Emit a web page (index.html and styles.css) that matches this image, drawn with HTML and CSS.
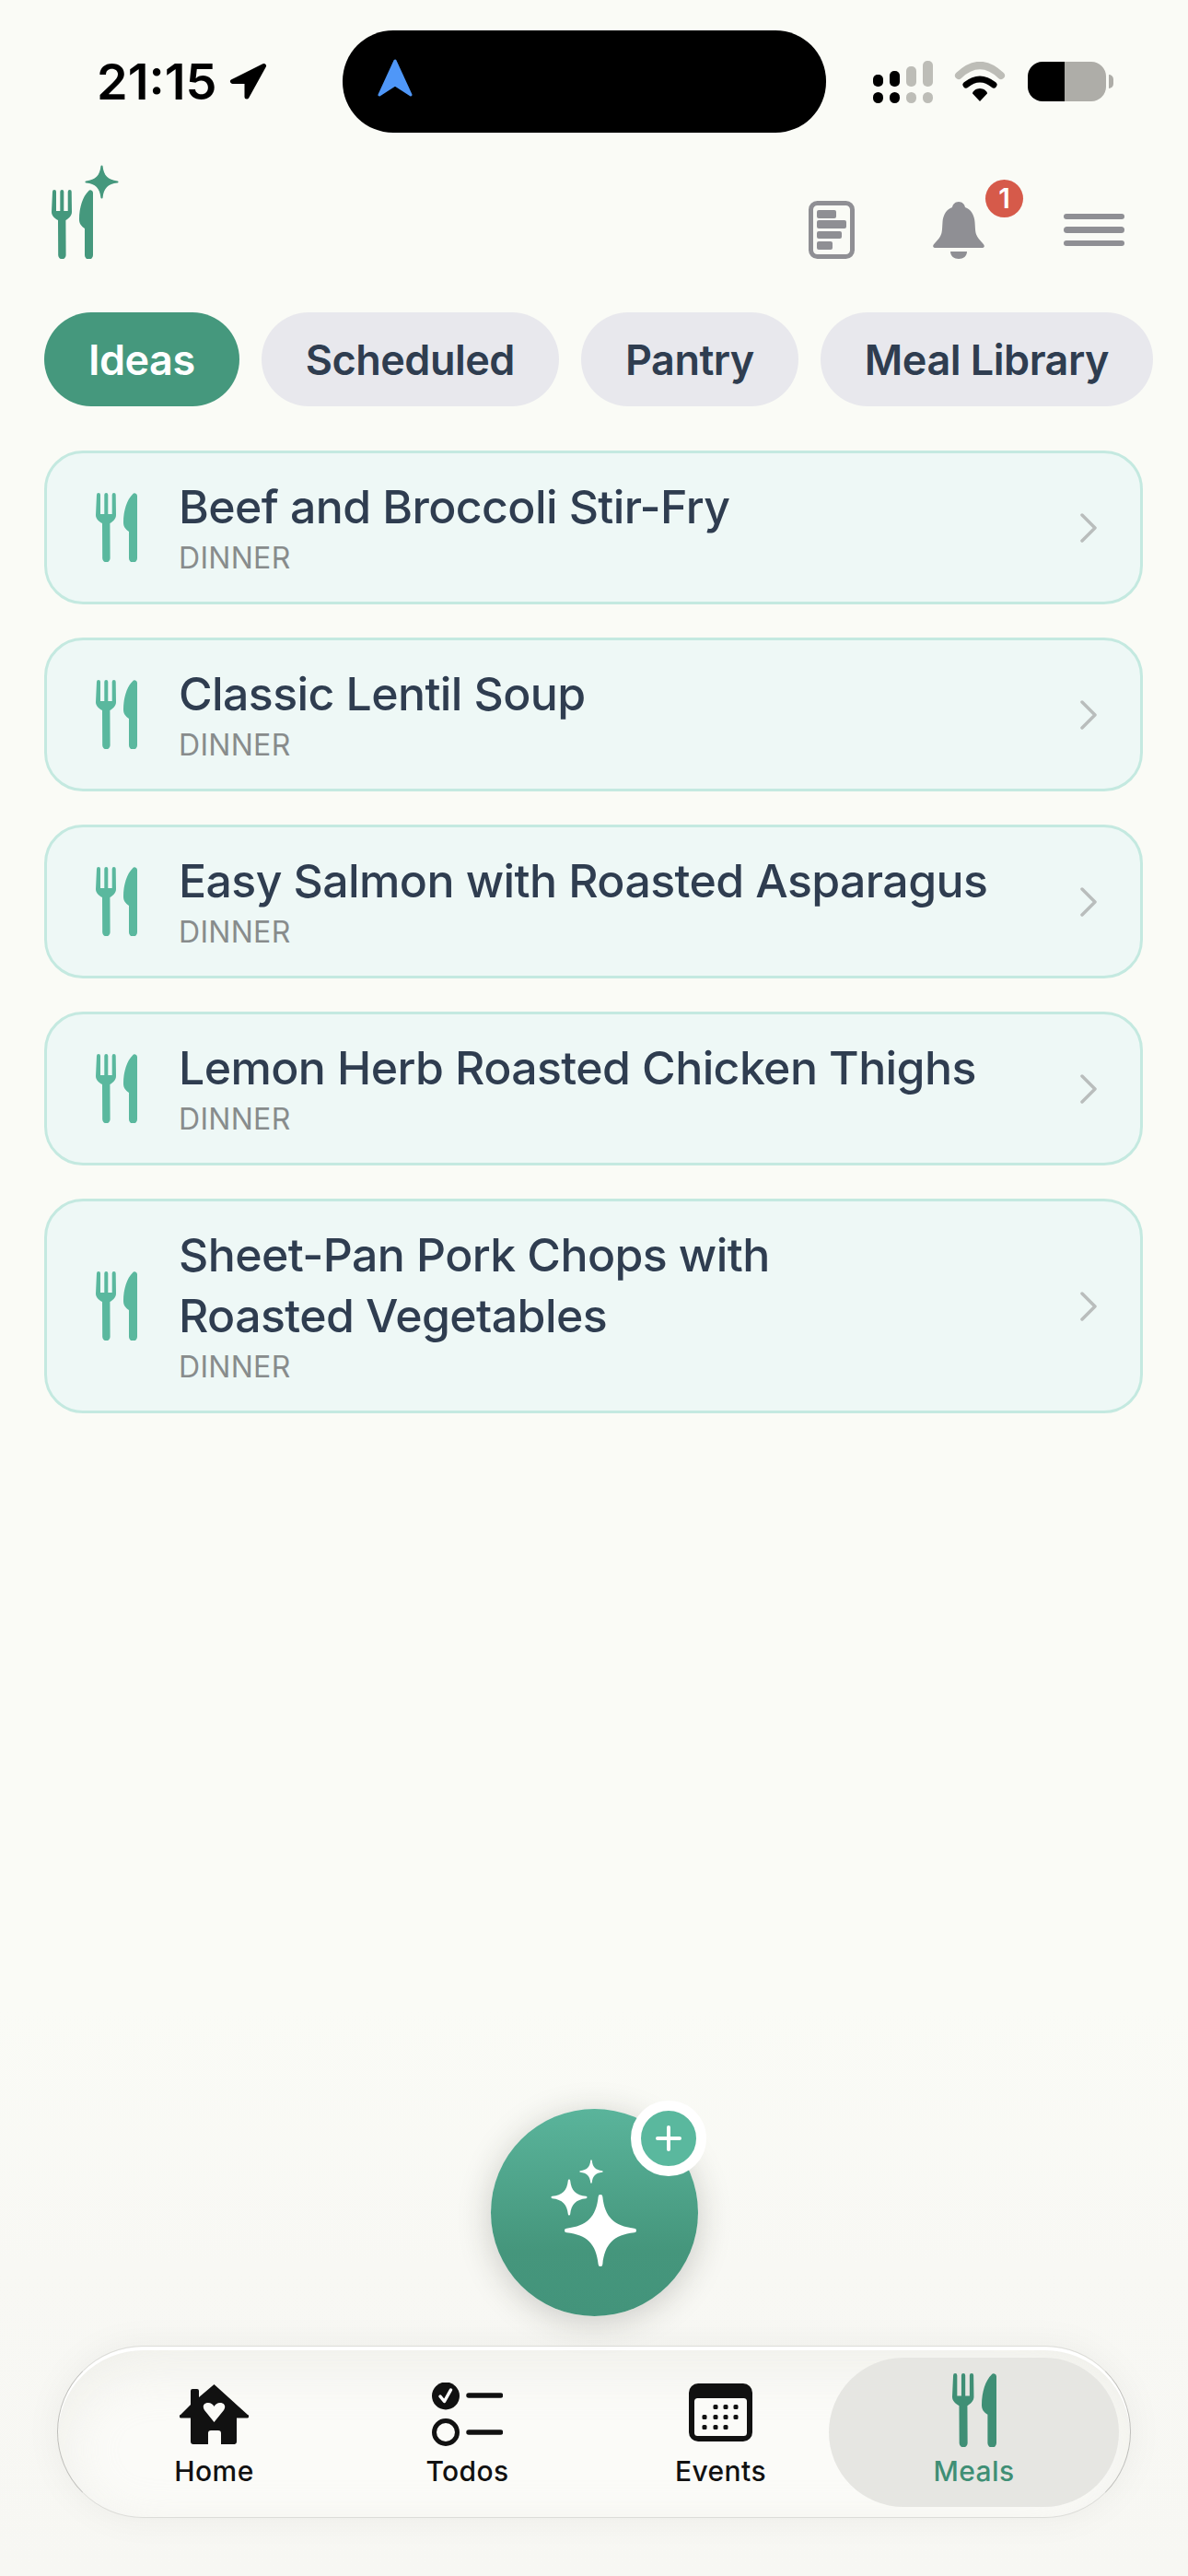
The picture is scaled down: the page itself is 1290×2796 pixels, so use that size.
FILE: index.html
```html
<!DOCTYPE html>
<html lang="en">
<head>
<meta charset="utf-8">
<title>Meals</title>
<link rel="stylesheet" href="styles.css">
</head>
<body>
<svg class="defs" width="0" height="0" aria-hidden="true">
  <symbol id="cutlery" viewBox="0 0 45 75">
    <path d="M1 2a2 2 0 0 1 4 0V23h4.300V2a2 2 0 0 1 4 0V23h4.400V2a2 2 0 0 1 4 0L22 24C22 28 19 31 15.400 33L15.600 71a4.200 4.200 0 0 1-8.400 0L7 33C3 31 0 28 0 24Z"/>
    <path d="M45 3a2.800 2.800 0 0 0-5-1.600C34 7 30 19 30 32C30 37 32 39 36 42V71a4.500 4.500 0 0 0 9 0Z"/>
  </symbol>
  <symbol id="spark" viewBox="-12 -12 24 24">
    <path d="M-.7-11a.7.7 0 0 1 1.400 0C1.400-4.400 4.400-1.400 11-.7a.7.7 0 0 1 0 1.400C4.400 1.400 1.400 4.400.7 11a.7.7 0 0 1-1.400 0C-1.400 4.400-4.400 1.400-11 .7a.7.7 0 0 1 0-1.400C-4.400-1.400-1.400-4.400-.7-11Z"/>
  </symbol>
</svg>

<header class="status">
  <div class="status-left">
    <span class="clock">21:15</span>
    <svg class="loc" viewBox="0 0 42 41"><path d="M38.500 3.500 4.500 20.500H20V37Z"/></svg>
  </div>
  <div class="island">
    <svg class="island-arrow" viewBox="0 0 38 41"><path d="M19 2 2 39 19 28 36 39Z"/></svg>
  </div>
  <div class="status-right">
    <svg class="signal" viewBox="0 0 65 46">
      <g class="on"><rect x="0" y="15" width="11" height="13" rx="5"/><rect x="0" y="34" width="11" height="12" rx="5.500"/><rect x="18" y="11" width="11" height="17" rx="5"/><rect x="18" y="34" width="11" height="12" rx="5.500"/></g>
      <g class="off"><rect x="36" y="6" width="11" height="22" rx="5"/><rect x="36" y="34" width="11" height="12" rx="5.500"/><rect x="54" y="0" width="11" height="28" rx="5"/><rect x="54" y="34" width="11" height="12" rx="5.500"/></g>
    </svg>
    <svg class="wifi" viewBox="0 0 56 43">
      <path class="wifi-off" d="M5 15Q28-7 51 15"/>
      <path class="wifi-on" d="M13 25Q28 13 43 25"/>
      <path d="M28 29C32 29 36 32 36 34.500L28 43 20 34.500C20 32 24 29 28 29Z"/>
    </svg>
    <div class="battery"><div class="battery-cell"></div><div class="battery-nub"></div></div>
  </div>
</header>

<section class="topbar">
  <div class="logo">
    <svg class="cutlery logo-mark"><use href="#cutlery"/></svg>
    <svg class="logo-spark"><use href="#spark"/></svg>
  </div>
  <div class="actions">
    <svg class="doc" viewBox="0 0 50 63">
      <rect x="2.500" y="2.500" width="45" height="58" rx="7" class="doc-frame"/>
      <rect x="9" y="10" width="21" height="9" rx="2"/><rect x="9" y="21" width="32" height="9" rx="2"/><rect x="9" y="33" width="27" height="8" rx="2"/><rect x="9" y="44" width="17" height="9" rx="2"/>
    </svg>
    <div class="bell-wrap">
      <svg class="bell" viewBox="0 0 56 62">
        <path d="M28 0C32 0 34.500 3 35 6C41 8 45 14 45.500 22L46 30C46.500 38 50 40 54 45C57 48 56 50 53 50H3C0 50-1 48 2 45C6 40 9.500 38 10 30L10.500 22C11 14 15 8 21 6C21.500 3 24 0 28 0Z"/>
        <path d="M19 54H37C37 59 33 62 28 62C23 62 19 59 19 54Z"/>
      </svg>
      <span class="badge">1</span>
    </div>
    <div class="burger"><span></span><span></span><span></span></div>
  </div>
</section>

<nav class="tabs">
  <span class="tab active">Ideas</span>
  <span class="tab">Scheduled</span>
  <span class="tab">Pantry</span>
  <span class="tab">Meal Library</span>
</nav>

<main class="cards">
  <article class="card">
    <svg class="cutlery"><use href="#cutlery"/></svg>
    <div class="card-text"><h2>Beef and Broccoli Stir-Fry</h2><p>DINNER</p></div>
    <svg class="chev" viewBox="0 0 18 32"><path d="M2 2 16 16 2 30"/></svg>
  </article>
  <article class="card">
    <svg class="cutlery"><use href="#cutlery"/></svg>
    <div class="card-text"><h2>Classic Lentil Soup</h2><p>DINNER</p></div>
    <svg class="chev" viewBox="0 0 18 32"><path d="M2 2 16 16 2 30"/></svg>
  </article>
  <article class="card">
    <svg class="cutlery"><use href="#cutlery"/></svg>
    <div class="card-text"><h2>Easy Salmon with Roasted Asparagus</h2><p>DINNER</p></div>
    <svg class="chev" viewBox="0 0 18 32"><path d="M2 2 16 16 2 30"/></svg>
  </article>
  <article class="card">
    <svg class="cutlery"><use href="#cutlery"/></svg>
    <div class="card-text"><h2>Lemon Herb Roasted Chicken Thighs</h2><p>DINNER</p></div>
    <svg class="chev" viewBox="0 0 18 32"><path d="M2 2 16 16 2 30"/></svg>
  </article>
  <article class="card">
    <svg class="cutlery"><use href="#cutlery"/></svg>
    <div class="card-text"><h2>Sheet-Pan Pork Chops with<br>Roasted Vegetables</h2><p>DINNER</p></div>
    <svg class="chev" viewBox="0 0 18 32"><path d="M2 2 16 16 2 30"/></svg>
  </article>
</main>

<footer class="dock">
  <div class="fab">
    <svg class="fab-spark s1"><use href="#spark"/></svg>
    <svg class="fab-spark s2"><use href="#spark"/></svg>
    <svg class="fab-spark s3"><use href="#spark"/></svg>
    <div class="fab-plus"><svg viewBox="0 0 28 28"><path d="M14 2V26M2 14H26"/></svg></div>
  </div>
  <nav class="tabbar">
    <div class="item">
      <div class="slot">
        <svg class="i-home" viewBox="0 0 75 65"><path fill-rule="evenodd" d="M37.500 0 74 33A1.700 1.700 0 0 1 73 36.500H62V62A3 3 0 0 1 59 65H45V53A3 3 0 0 0 42 50H34A3 3 0 0 0 31 53V65H15A3 3 0 0 1 12 62V36.500H2A1.700 1.700 0 0 1 1 33L12 22V7A2 2 0 0 1 14 5H19A2 2 0 0 1 21 7V14ZM37.500 41 27 28C24 23 27 20 31 20C34 20 36.500 22 37.500 24C38.500 22 41 20 44 20C48 20 51 23 48 28Z"/></svg>
      </div>
      <span class="label">Home</span>
    </div>
    <div class="item">
      <div class="slot">
        <svg class="i-todos" viewBox="0 0 77 69">
          <circle cx="15" cy="14.500" r="15"/>
          <path class="todo-check" d="M9 15 13.500 20.500 20.500 8"/>
          <path class="todo-line" d="M40 14H74.500M40 54H74.500"/>
          <circle class="todo-ring" cx="15" cy="54" r="12.500"/>
        </svg>
      </div>
      <span class="label">Todos</span>
    </div>
    <div class="item">
      <div class="slot">
        <svg class="i-events" viewBox="0 0 69 63">
          <rect width="69" height="63" rx="10"/>
          <rect class="panel" x="6" y="16" width="57" height="41" rx="3.500"/>
          <g class="dots">
            <rect x="26.500" y="23" width="5" height="5" rx="1.500"/><rect x="37.500" y="23" width="5" height="5" rx="1.500"/><rect x="48.500" y="23" width="5" height="5" rx="1.500"/>
            <rect x="14.500" y="34" width="5" height="5" rx="1.500"/><rect x="26.500" y="34" width="5" height="5" rx="1.500"/><rect x="37.500" y="34" width="5" height="5" rx="1.500"/><rect x="48.500" y="34" width="5" height="5" rx="1.500"/>
            <rect x="14.500" y="45" width="5" height="5" rx="1.500"/><rect x="26.500" y="45" width="5" height="5" rx="1.500"/><rect x="37.500" y="45" width="5" height="5" rx="1.500"/>
          </g>
        </svg>
      </div>
      <span class="label">Events</span>
    </div>
    <div class="item current">
      <div class="slot top">
        <svg class="cutlery big"><use href="#cutlery"/></svg>
      </div>
      <span class="label">Meals</span>
    </div>
  </nav>
</footer>
</body>
</html>
```

FILE: styles.css
```css
* { box-sizing: border-box; }
html, body { margin: 0; padding: 0; }
body {
  width: 1290px;
  height: 2796px;
  background: linear-gradient(to bottom, #fafbf6 78%, #f8f8f4 88%, #f7f7f3 100%);
  font-family: Inter, "Noto Sans", sans-serif;
  color: #2f3d50;
  display: flex;
  flex-direction: column;
  overflow: hidden;
}
.defs { position: absolute; }

/* status bar */
.status {
  display: flex;
  align-items: center;
  height: 144px;
  padding: 33px 0 0 105px;
}
.status-left { display: flex; align-items: center; width: 267px; }
.clock { font-size: 54px; font-weight: 600; color: #000; line-height: 1; width: 143px; }
.loc { width: 42px; height: 41px; fill: #000; stroke: #000; stroke-width: 5; stroke-linejoin: round; }
.island {
  width: 525px;
  height: 111px;
  border-radius: 55px;
  background: #000;
  display: flex;
  align-items: center;
  padding-left: 38px;
}
.island-arrow { width: 38px; height: 41px; margin-top: -9px; fill: #4f97f8; stroke: #4f97f8; stroke-width: 3; stroke-linejoin: round; }
.status-right { display: flex; align-items: center; margin-left: 51px; }
.signal { width: 65px; height: 46px; }
.signal .on { fill: #000; }
.signal .off { fill: #bdbdb7; }
.wifi { width: 56px; height: 43px; margin-left: 23px; }
.wifi-off { fill: none; stroke: #bdbdb7; stroke-width: 8; stroke-linecap: round; }
.wifi-on { fill: none; stroke: #000; stroke-width: 7; stroke-linecap: round; }
.battery { display: flex; align-items: center; margin-left: 24px; }
.battery-cell {
  width: 85px;
  height: 43px;
  border-radius: 16px;
  background: linear-gradient(to right, #000 47%, #aeada8 47%);
}
.battery-nub { width: 5px; height: 15px; margin-left: 3px; background: #aeada8; border-radius: 0 5px 5px 0; }

/* top bar */
.topbar {
  display: flex;
  justify-content: space-between;
  align-items: flex-end;
  height: 137px;
  padding: 35px 69px 0 56px;
}
.cutlery { width: 45px; height: 75px; flex: none; fill: currentColor; display: block; }
.logo { position: relative; width: 73px; height: 102px; color: #45987d; display: flex; align-items: flex-end; }
.logo-spark { position: absolute; left: 36px; top: 0; width: 37px; height: 37px; fill: currentColor; }
.actions { display: flex; align-items: flex-end; gap: 85px; }
.doc { width: 50px; height: 63px; fill: #8f8f94; display: block; }
.doc-frame { fill: none; stroke: #8f8f94; stroke-width: 5; }
.bell-wrap { position: relative; width: 56px; height: 62px; }
.bell { width: 56px; height: 62px; fill: #8f8f94; display: block; }
.badge {
  position: absolute;
  left: 57px;
  top: -24px;
  width: 41px;
  height: 41px;
  border-radius: 50%;
  background: #d65a4a;
  color: #fff;
  font-size: 30px;
  font-weight: 600;
  line-height: 41px;
  text-align: center;
}
.burger { display: flex; flex-direction: column; gap: 8px; width: 66px; margin-bottom: 14px; margin-left: 1px; }
.burger span { height: 6.500px; border-radius: 3.500px; background: #8f8f94; }

/* tabs */
.tabs { display: flex; gap: 24px; margin: 58px 0 0 48px; }
.tab {
  height: 102px;
  line-height: 103px;
  padding: 0 48px;
  border-radius: 51px;
  background: #e8e8ed;
  font-size: 45px;
  font-weight: 560;
  letter-spacing: -.5px;
  color: #2f3d50;
  white-space: nowrap;
}
.tab.active { background: #45987d; color: #fff; }

/* cards */
.cards { display: flex; flex-direction: column; gap: 36px; margin: 48px 49px 0 48px; }
.card {
  display: flex;
  align-items: center;
  padding: 25px 47px 27px 53px;
  border: 3px solid #c4e9e0;
  border-radius: 42px;
  background: #eef8f6;
  color: #5ab89e;
}
.card .cutlery, .card .chev { margin-top: 2px; }
.card-text { flex: 1; margin-left: 45px; }
.card h2 { margin: 0; font-size: 50px; font-weight: 500; line-height: 66px; letter-spacing: -.6px; color: #2f3d50; }
.card p { margin: 3px 0 0; font-size: 32px; font-weight: 400; line-height: 40px; color: #888c8c; letter-spacing: .3px; }
.chev { width: 18px; height: 32px; fill: none; stroke: #b9bdbc; stroke-width: 3.500; stroke-linecap: round; stroke-linejoin: round; }

/* dock */
.dock { margin-top: auto; padding-bottom: 63px; display: flex; flex-direction: column; align-items: center; }
.fab {
  position: relative;
  width: 225px;
  height: 225px;
  margin-bottom: 32px;
  border-radius: 50%;
  background: linear-gradient(to bottom, #5ab49b 0%, #45967c 68%, #43947b 100%);
  box-shadow: 0 6px 36px rgba(40, 40, 30, .22);
}
.fab-spark { position: absolute; fill: #fff; }
.s1 { left: 79px; top: 92px; width: 80px; height: 80px; }
.s2 { left: 65px; top: 76px; width: 40px; height: 40px; }
.s3 { left: 96px; top: 55px; width: 26px; height: 26px; }
.fab-plus {
  position: absolute;
  left: 152px;
  top: -9px;
  width: 82px;
  height: 82px;
  border: 11px solid #fff;
  border-radius: 50%;
  background: #5ab89e;
  display: flex;
  align-items: center;
  justify-content: center;
}
.fab-plus svg { width: 28px; height: 28px; fill: none; stroke: #fff; stroke-width: 4; stroke-linecap: round; }
.tabbar {
  width: 1166px;
  height: 187px;
  padding: 29px 32px 0;
  border: 1.500px solid #dcdcd8;
  border-left-color: #bebeba;
  border-right-color: #bebeba;
  border-radius: 94px;
  background: #fbfbf8;
  box-shadow: 0 0 40px rgba(30, 30, 20, .05), inset 0 4px 0 #fff, inset 0 20px 60px rgba(225, 225, 216, .45);
  display: grid;
  grid-template-columns: repeat(4, 275px);
  align-content: start;
  justify-content: center;
}
.item { position: relative; isolation: isolate; display: flex; flex-direction: column; align-items: center; height: 124px; color: #111; }
.slot { height: 88px; display: flex; align-items: center; justify-content: center; }
.slot.top { align-items: flex-start; }
.label { font-size: 30px; font-weight: 500; line-height: 36px; letter-spacing: .4px; color: #111; }
.i-home { width: 75px; height: 65px; fill: #111; }
.i-todos { width: 77px; height: 69px; fill: #111; }
.todo-check { fill: none; stroke: #fff; stroke-width: 3.500; stroke-linecap: round; stroke-linejoin: round; }
.todo-line { fill: none; stroke: #111; stroke-width: 5.500; stroke-linecap: round; }
.todo-ring { fill: none; stroke: #111; stroke-width: 5; }
.i-events { width: 69px; height: 63px; fill: #111; margin-top: -3px; }
.i-events .panel { fill: #fbfbf8; }
.i-events .dots { fill: #111; }
.item.current { color: #3f8f75; }
.item.current .label { color: #3f8f75; }
.item.current::before {
  content: "";
  position: absolute;
  z-index: -1;
  left: -20px;
  right: -20px;
  top: -17px;
  bottom: -21px;
  border-radius: 81px;
  background: #e6e6e2;
}
.cutlery.big { width: 48px; height: 80px; }
```
